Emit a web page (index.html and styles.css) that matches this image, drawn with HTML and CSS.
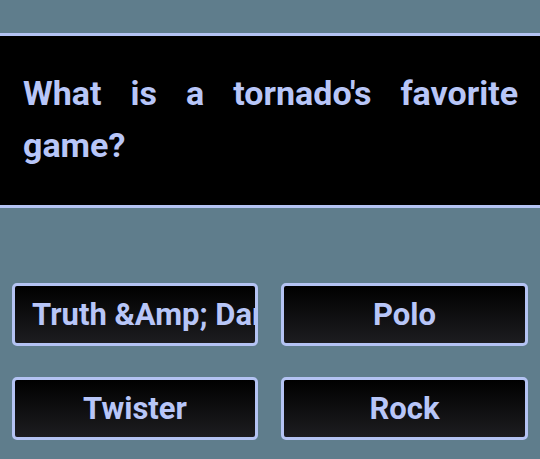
FILE: index.html
```html
<!DOCTYPE html>
<html>
<head>
<meta charset="utf-8">
<link rel="stylesheet" href="styles.css">
</head>
<body>
<div class="page">
  <div class="question">
    <p class="question-text">What is a tornado's favorite game?</p>
  </div>
  <div class="answers">
    <button class="answer">Truth &amp;Amp; Dare</button>
    <button class="answer">Polo</button>
    <button class="answer">Twister</button>
    <button class="answer">Rock</button>
  </div>
</div>
</body>
</html>
```
FILE: styles.css
```css
html, body {
  margin: 0;
  padding: 0;
}
body {
  background: #5f7d8c;
  width: 540px;
  height: 459px;
  overflow: hidden;
  font-family: Roboto, "Liberation Sans", sans-serif;
}
.page {
  padding-top: 33px;
}
.question {
  background: #000;
  border-top: 3px solid #b4c3f3;
  border-bottom: 3px solid #b4c3f3;
  padding: 31px 22px 34px 23px;
}
.question-text {
  margin: 0;
  color: #b8c6f8;
  font-weight: 700;
  font-size: 34px;
  line-height: 52px;
  text-align: justify;
}
.answers {
  display: grid;
  grid-template-columns: 246px 247px;
  column-gap: 23px;
  row-gap: 31px;
  padding: 75px 0 0 12px;
}
.answer {
  height: 63px;
  box-sizing: border-box;
  border: 3px solid #b4c3f3;
  border-radius: 5px;
  background: linear-gradient(to bottom, #000 0%, #1d1d20 100%);
  color: #b8c6f8;
  font-family: Roboto, "Liberation Sans", sans-serif;
  font-weight: 700;
  font-size: 31px;
  padding: 0 17px;
  white-space: nowrap;
  overflow: hidden;
  text-align: center;
  display: block;
}
```
